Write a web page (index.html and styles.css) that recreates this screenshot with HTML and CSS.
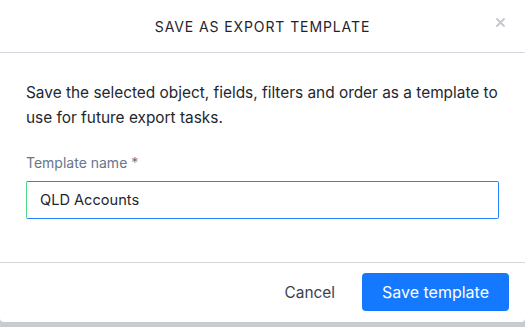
FILE: index.html
```html
<!DOCTYPE html>
<html lang="en">
<head>
    <meta charset="UTF-8">
    <meta name="viewport" content="width=device-width, initial-scale=1.0">
    <title>Save as export template</title>
    <link rel="stylesheet" href="styles.css">
</head>
<body>
    <div class="modal">
        <div class="modal-header">
            <h2 class="modal-title">SAVE AS EXPORT TEMPLATE</h2>
            <button class="close" aria-label="Close">
                <svg width="9" height="9" viewBox="0 0 9 9"><path d="M1 1 L8 8 M8 1 L1 8" stroke="#c3c7cf" stroke-width="1.8" stroke-linecap="round"/></svg>
            </button>
        </div>
        <div class="modal-body">
            <p class="intro">Save the selected object, fields, filters and order as a template to use for future export tasks.</p>
            <label class="field-label" for="name">Template name *</label>
            <input type="text" id="name" class="field-input" value="QLD Accounts">
        </div>
        <div class="modal-footer">
            <button class="btn-cancel">Cancel</button>
            <button class="btn-save">Save template</button>
        </div>
    </div>
</body>
</html>
```

FILE: styles.css
```css
body {
    margin: 0;
    background-color: #c8ccd0;
    font-family: Inter, "Noto Sans", sans-serif;
}
.modal {
    background-color: white;
    height: 322px;
    border-radius: 0 0 4px 4px;
    display: flex;
    flex-direction: column;
}
.modal-header {
    height: 52px;
    border-bottom: 1px solid #d6d6e0;
    display: flex;
    align-items: center;
    justify-content: center;
    position: relative;
}
.modal-title {
    margin: 0;
    font-size: 14px;
    font-weight: 400;
    letter-spacing: 0.9px;
    color: #1f2430;
}
.close {
    position: absolute;
    right: 20px;
    top: 18px;
    border: none;
    background: none;
    padding: 0;
    width: 9px;
    height: 9px;
    display: flex;
}
.modal-body {
    padding: 27px 26px 43px 26px;
    display: flex;
    flex-direction: column;
}
.intro {
    margin: 0 0 23px 0;
    font-size: 15.4px;
    line-height: 25px;
    color: #23272f;
}
.field-label {
    font-size: 14px;
    line-height: 20px;
    color: #69758a;
    margin-bottom: 8px;
}
.field-input {
    height: 38px;
    box-sizing: border-box;
    border: 1px solid #2684ff;
    border-left-color: #4cd98a;
    border-radius: 2px;
    padding: 0 13px;
    font-family: Inter, "Noto Sans", sans-serif;
    font-size: 14.6px;
    color: #23272f;
    outline: none;
}
.modal-footer {
    flex: 1;
    border-top: 1px solid #d4d6da;
    display: flex;
    justify-content: flex-end;
    align-items: flex-start;
    padding: 10px 16px 0 0;
    gap: 27px;
}
.btn-cancel {
    border: none;
    background: none;
    font-family: Inter, "Noto Sans", sans-serif;
    font-size: 15.4px;
    color: #3a4150;
    height: 38px;
    padding: 0;
}
.btn-save {
    border: none;
    background-color: #1479ff;
    color: white;
    font-family: Inter, "Noto Sans", sans-serif;
    font-size: 16px;
    height: 38px;
    width: 147px;
    border-radius: 4px;
}
```
